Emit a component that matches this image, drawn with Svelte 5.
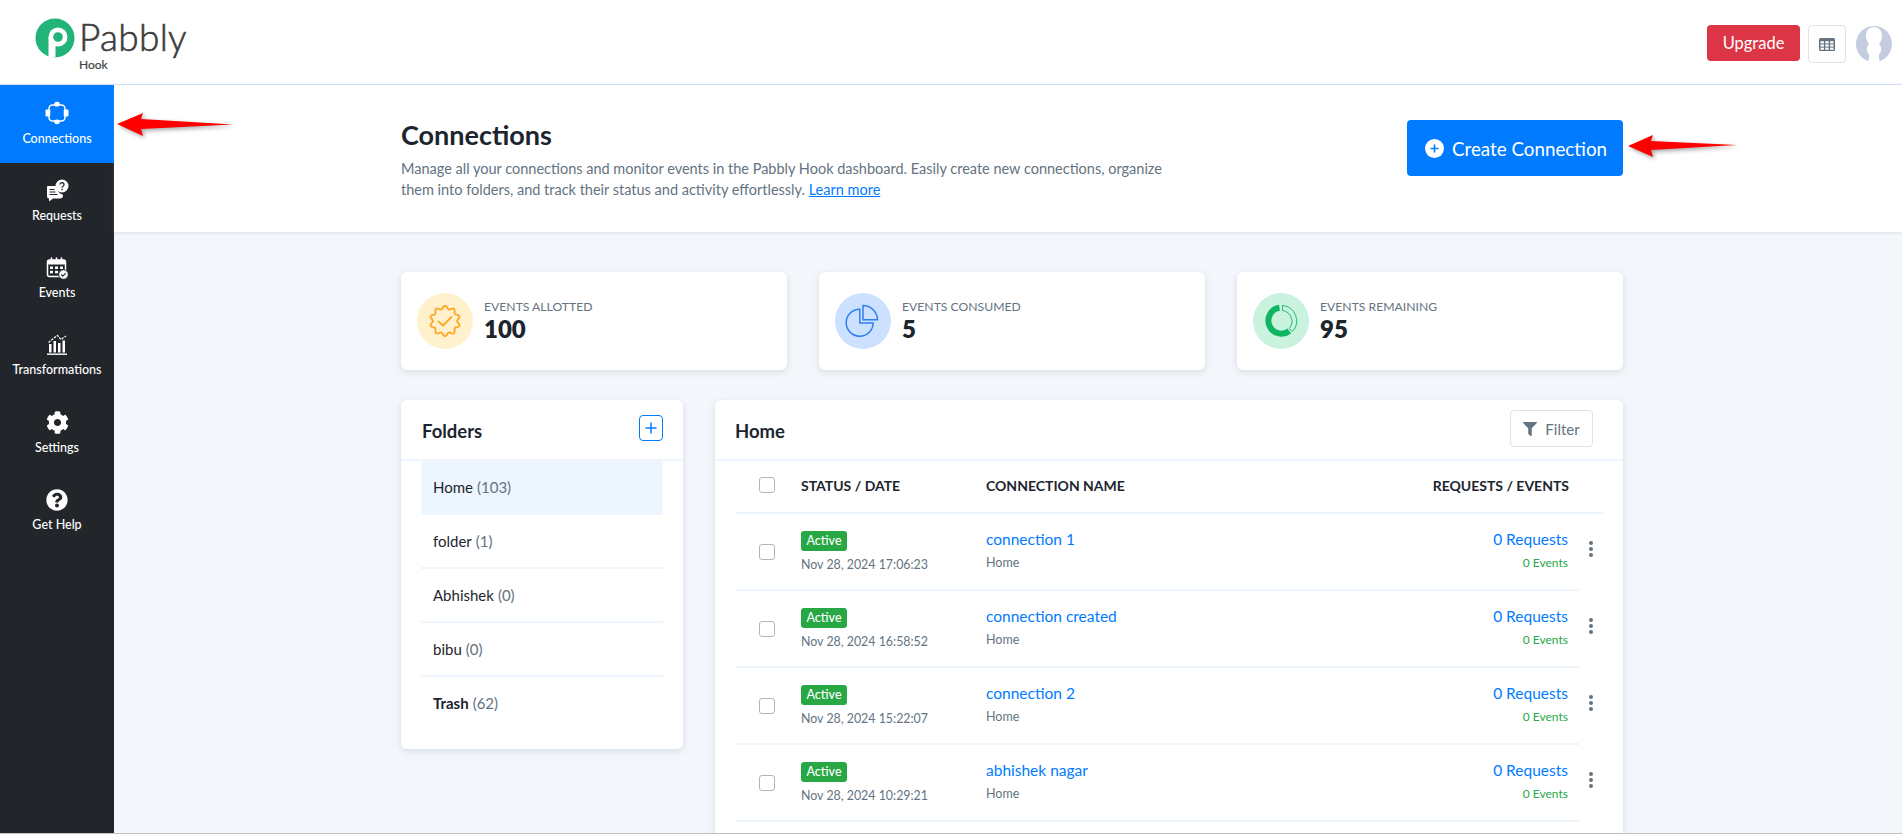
<script>
  const nav = ['Connections', 'Requests', 'Events', 'Transformations', 'Settings', 'Get Help'];
  const folders = [
    { name: 'Home', count: 103, active: true },
    { name: 'folder', count: 1 },
    { name: 'Abhishek', count: 0 },
    { name: 'bibu', count: 0 },
    { name: 'Trash', count: 62, bold: true }
  ];
  const rows = [
    { date: 'Nov 28, 2024 17:06:23', name: 'connection 1' },
    { date: 'Nov 28, 2024 16:58:52', name: 'connection created' },
    { date: 'Nov 28, 2024 15:22:07', name: 'connection 2' },
    { date: 'Nov 28, 2024 10:29:21', name: 'abhishek nagar' }
  ];
  let badge = '';
  for (let i = 0; i <= 120; i++) {
    const t = (i / 120) * Math.PI * 2;
    const r = 13.6 + 1.5 * Math.cos(10 * t);
    badge += (i ? 'L' : 'M') + (18 + r * Math.sin(t)).toFixed(2) + ' ' + (18 - r * Math.cos(t)).toFixed(2);
  }
  badge += 'Z';
</script>

<div class="page">
  <header class="top">
    <div class="logo">
      <svg class="logo-mark" viewBox="0 0 40 40" width="40" height="40">
        <circle cx="20" cy="20" r="19.5" fill="#22b378" />
        <circle cx="23" cy="19" r="9.500" fill="#fff" />
        <rect x="13.500" y="19" width="7" height="20.400" fill="#fff" />
        <circle cx="23" cy="19" r="4.800" fill="#22b378" />
      </svg>
      <div class="logo-text">
        <span class="logo-name">Pabbly</span>
        <span class="logo-sub">Hook</span>
      </div>
    </div>
    <div class="top-actions">
      <button class="upgrade">Upgrade</button>
      <button class="grid-btn" aria-label="Apps">
        <svg viewBox="0 0 16 13" width="16" height="13">
          <rect width="16" height="13" rx="1.5" fill="#637381" />
          <g fill="#fff">
            <rect x="1.5" y="3.2" width="3.4" height="2.2" /><rect x="6.3" y="3.2" width="3.4" height="2.2" /><rect x="11.1" y="3.2" width="3.4" height="2.2" />
            <rect x="1.5" y="6.4" width="3.4" height="2.2" /><rect x="6.3" y="6.4" width="3.4" height="2.2" /><rect x="11.1" y="6.4" width="3.4" height="2.2" />
            <rect x="1.5" y="9.6" width="3.4" height="2.2" /><rect x="6.3" y="9.6" width="3.4" height="2.2" /><rect x="11.1" y="9.6" width="3.4" height="2.2" />
          </g>
        </svg>
      </button>
      <svg class="avatar" viewBox="0 0 36 36" width="36" height="36">
        <circle cx="18" cy="18" r="18" fill="#c4cde0" />
        <path d="M18 1c-5 0-8 3.600-8 8.500 0 3.500 1.200 6 2.500 8 .6 1-.2 2-1 3-1.400 1.800-.8 5 1 7 1 1.200.8 5-.5 9h12c-1.300-4-1.500-7.800-.5-9 1.800-2 2.400-5.200 1-7-.8-1-1.600-2-1-3 1.300-2 2.500-4.500 2.500-8C26 4.600 23 1 18 1z" fill="#fff" />
      </svg>
    </div>
  </header>

  <div class="body">
    <nav class="side">
      {#each nav as label, i}
        <div class="nav-item" class:active={i === 0}>
          <div class="nav-icon">
            {#if i === 0}
              <svg viewBox="0 0 24 24" width="24" height="24" fill="#fff">
                <rect x="4" y="4" width="16" height="16" rx="3.500" fill="none" stroke="#fff" stroke-width="1.500" />
                <ellipse cx="12" cy="3.200" rx="2.800" ry="2.400" /><ellipse cx="12" cy="20.800" rx="2.800" ry="2.400" />
                <rect x="0.500" y="8.500" width="4.800" height="7" rx="1" /><rect x="18.700" y="8.500" width="4.800" height="7" rx="1" />
              </svg>
            {:else if i === 1}
              <svg viewBox="0 0 24 24" width="24" height="24" fill="#fff">
                <path d="M3 7h9v1.500a8 8 0 0 0 6 7.200v.8a3 3 0 0 1-3 3H8l-4 3v-3a2 2 0 0 1-2-2V8a1 1 0 0 1 1-1z" />
                <circle cx="17" cy="7" r="6.500" />
                <path d="M15 5.500a2 2 0 1 1 3 1.800c-.7.400-1 .8-1 1.500" fill="none" stroke="#22262b" stroke-width="1.300" />
                <circle cx="17" cy="10.600" r=".8" fill="#22262b" />
                <path d="M4.500 10.500h5M4.500 13h6M4.500 15.500h8" stroke="#22262b" stroke-width="1.100" />
              </svg>
            {:else if i === 2}
              <svg viewBox="0 0 24 24" width="24" height="24" fill="#fff">
                <rect x="2.500" y="4" width="18" height="16.500" rx="2" fill="none" stroke="#fff" stroke-width="1.500" />
                <rect x="2.500" y="4" width="18" height="4.500" rx="1.500" />
                <path d="M6.500 2v3M11.500 2v3M16.500 2v3" stroke="#fff" stroke-width="1.600" stroke-linecap="round" />
                <g>
                  <rect x="5" y="10.500" width="3" height="2.500" /><rect x="10" y="10.500" width="3" height="2.500" /><rect x="15" y="10.500" width="3" height="2.500" />
                  <rect x="5" y="14.800" width="3" height="2.500" /><rect x="10" y="14.800" width="3" height="2.500" />
                </g>
                <circle cx="18.500" cy="18.500" r="4.800" stroke="#22262b" stroke-width="1" />
                <path d="M16.300 18.500l1.600 1.600 2.800-2.900" fill="none" stroke="#22262b" stroke-width="1.100" />
              </svg>
            {:else if i === 3}
              <svg viewBox="0 0 24 24" width="24" height="24" fill="#fff">
                <path d="M3.500 9.500L9 5l3.500-2.500 3.500 4 5-3.500" fill="none" stroke="#fff" stroke-width="1.200" stroke-dasharray="2.500 1" />
                <rect x="4" y="11" width="2.500" height="8.500" /><rect x="8.500" y="8" width="2.500" height="11.500" /><rect x="13" y="10" width="2.500" height="9.500" /><rect x="17.500" y="7.500" width="2.500" height="12" />
                <rect x="2" y="20.500" width="20" height="1.400" />
              </svg>
            {:else if i === 4}
              <svg viewBox="0 0 512 512" width="23" height="23" fill="#fff">
                <path d="M487.4 315.7l-42.6-24.6c4.3-23.2 4.3-47 0-70.2l42.6-24.6c4.9-2.8 7.1-8.6 5.500-14-11.100-35.600-30-67.800-54.700-94.600-3.800-4.100-10-5.100-14.800-2.300L380.800 110c-17.900-15.400-38.500-27.300-60.800-35.100V25.800c0-5.600-3.900-10.500-9.400-11.700-36.700-8.200-74.300-7.800-109.200 0-5.500 1.200-9.400 6.100-9.400 11.700V75c-22.200 7.900-42.800 19.800-60.800 35.100L88.700 85.500c-4.900-2.800-11-1.900-14.800 2.300-24.700 26.700-43.600 58.900-54.700 94.600-1.700 5.400.6 11.200 5.500 14L67.300 221c-4.300 23.200-4.300 47 0 70.200l-42.600 24.600c-4.900 2.800-7.100 8.600-5.500 14 11.100 35.600 30 67.800 54.700 94.600 3.800 4.100 10 5.100 14.800 2.300l42.600-24.600c17.900 15.400 38.500 27.300 60.800 35.100v49.200c0 5.600 3.900 10.500 9.400 11.700 36.700 8.200 74.300 7.800 109.200 0 5.500-1.200 9.400-6.100 9.400-11.700v-49.200c22.200-7.900 42.800-19.800 60.800-35.100l42.600 24.600c4.900 2.800 11 1.900 14.800-2.300 24.700-26.700 43.600-58.900 54.700-94.600 1.500-5.500-.7-11.300-5.600-14.100zM256 336c-44.100 0-80-35.900-80-80s35.900-80 80-80 80 35.900 80 80-35.900 80-80 80z" />
              </svg>
            {:else}
              <svg viewBox="0 0 512 512" width="22" height="22" fill="#fff">
                <path d="M504 256c0 136.997-111.043 248-248 248S8 392.997 8 256C8 119.083 119.043 8 256 8s248 111.083 248 248zM262.655 90c-54.497 0-89.255 22.957-116.549 63.758-3.536 5.286-2.353 12.415 2.715 16.258l34.699 26.31c5.205 3.947 12.621 3.008 16.665-2.122 17.864-22.658 30.113-35.797 57.303-35.797 20.429 0 45.698 13.148 45.698 32.958 0 14.976-12.363 22.667-32.534 33.976C247.128 238.528 216 254.941 216 296v4c0 6.627 5.373 12 12 12h56c6.627 0 12-5.373 12-12v-1.333c0-28.462 83.186-29.647 83.186-106.667 0-58.002-60.165-102-116.531-102zM256 338c-25.365 0-46 20.635-46 46 0 25.364 20.635 46 46 46s46-20.636 46-46c0-25.365-20.635-46-46-46z" />
              </svg>
            {/if}
          </div>
          <span class="nav-label">{label}</span>
        </div>
      {/each}
    </nav>

    <main class="main">
      <section class="hero">
        <div class="hero-text">
          <h1>Connections</h1>
          <p>Manage all your connections and monitor events in the Pabbly Hook dashboard. Easily create new connections, organize them into folders, and track their status and activity effortlessly. <a href="#top">Learn more</a></p>
        </div>
        <button class="create">
          <svg viewBox="0 0 18 18" width="19" height="19">
            <circle cx="9" cy="9" r="9" fill="#fff" />
            <path d="M9 5.200v7.600M5.200 9h7.600" stroke="#007bff" stroke-width="1.500" />
          </svg>
          Create Connection
        </button>
      </section>

      <section class="content">
        <div class="stats">
          <div class="stat">
            <div class="stat-icon amber">
              <svg viewBox="0 0 36 36" width="36" height="36" fill="none" stroke="#fda92d" stroke-width="1.900">
                <path d={badge} />
                <path d="M11.500 18.500l4.500 4 8.500-8.500" stroke-linecap="round" stroke-linejoin="round" />
              </svg>
            </div>
            <div><div class="stat-label">EVENTS ALLOTTED</div><div class="stat-value">100</div></div>
          </div>
          <div class="stat">
            <div class="stat-icon blue">
              <svg viewBox="0 0 36 36" width="36" height="36" fill="none" stroke="#2f7ff0" stroke-width="1.500">
                <path d="M14.800 6.200A13.500 13.500 0 1 0 28.200 20H14.800z" />
                <path d="M18 2.600V16.800h14.500A14.500 14.500 0 0 0 18 2.600z" />
              </svg>
            </div>
            <div><div class="stat-label">EVENTS CONSUMED</div><div class="stat-value">5</div></div>
          </div>
          <div class="stat">
            <div class="stat-icon green">
              <svg viewBox="0 0 36 36" width="36" height="36" fill="none">
                <path d="M16.500 4.800A13 13 0 1 0 26.300 28" stroke="#10b561" stroke-width="6" />
                <path d="M19.500 2.500A15.500 15.500 0 0 1 29.500 28.500L26.300 25.500A11 11 0 0 0 19.500 7.500z" stroke="#10b561" stroke-width=".9" />
              </svg>
            </div>
            <div><div class="stat-label">EVENTS REMAINING</div><div class="stat-value">95</div></div>
          </div>
        </div>

        <div class="panels">
          <aside class="panel folders">
            <div class="panel-head">
              <h2>Folders</h2>
              <button class="add" aria-label="Add folder">
                <svg viewBox="0 0 14 14" width="14" height="14"><path d="M7 1.500v11M1.500 7h11" stroke="#007bff" stroke-width="1.500" /></svg>
              </button>
            </div>
            <ul>
              {#each folders as f}
                <li class:on={f.active}>
                  <span class:strong={f.bold}>{f.name}</span> <span class="count">({f.count})</span>
                </li>
              {/each}
            </ul>
          </aside>

          <div class="panel table">
            <div class="panel-head">
              <h2>Home</h2>
              <button class="filter">
                <svg viewBox="0 0 512 512" width="14" height="14" fill="#637381">
                  <path d="M487.976 0H24.028C2.71 0-8.047 25.866 7.058 40.971L192 225.941V432c0 7.831 3.821 15.328 10.237 19.82l80 55.98C298.02 518.69 320 507.493 320 487.98V225.941l184.947-184.97C520.021 25.896 509.338 0 487.976 0z" />
                </svg>
                Filter
              </button>
            </div>
            <div class="tbody">
              <div class="thead">
                <span class="cb head-cb"></span>
                <span>STATUS / DATE</span>
                <span>CONNECTION NAME</span>
                <span class="right">REQUESTS / EVENTS</span>
              </div>
              {#each rows as r}
                <div class="row-wrap">
                  <div class="row">
                    <span class="cb"></span>
                    <div class="stack">
                      <span class="badge">Active</span>
                      <span class="date">{r.date}</span>
                    </div>
                    <div class="stack names">
                      <span class="link">{r.name}</span>
                      <span class="sub">Home</span>
                    </div>
                    <div class="stack names right">
                      <span class="link">0 Requests</span>
                      <span class="events">0 Events</span>
                    </div>
                  </div>
                  <div class="dots"><i></i><i></i><i></i></div>
                </div>
              {/each}
            </div>
          </div>
        </div>
      </section>
    </main>
  </div>

  <svg class="arrow arrow-a" viewBox="0 0 130 40" width="130" height="40">
    <path d="M2 15L28 4 26 10 118 15.500 26 20 28 27z" fill="#f00" />
  </svg>
  <svg class="arrow arrow-b" viewBox="0 0 125 40" width="125" height="40">
    <path d="M2 16L27 5 25 11 111 15 25 20 27 27z" fill="#f00" />
  </svg>
  <div class="edge"></div>
</div>

<style>
  :global(body) {
    margin: 0;
    background: #f3f6fa;
    font-family: Lato, "Liberation Sans", sans-serif;
    color: #1c252e;
  }
  .page { position: relative; height: 834px; overflow: hidden; background: #f3f6fa; }
  button { font-family: inherit; cursor: pointer; }

  .top {
    height: 84px;
    box-sizing: content-box;
    background: #fff;
    border-bottom: 1px solid #d6e2fb;
    display: flex;
    align-items: flex-start;
    justify-content: space-between;
  }
  .logo { display: flex; margin: 18px 0 0 35px; gap: 4px; }
  .logo-mark { flex: none; }
  .logo-text { display: flex; flex-direction: column; color: #3d3d3d; }
  .logo-name { font-size: 37px; font-weight: 300; line-height: 38px; height: 40px; letter-spacing: .3px; -webkit-text-stroke: .6px #3d3d3d; }
  .logo-sub { font-size: 12px; line-height: 14px; font-weight: 400; color: #444; -webkit-text-stroke: .2px #444; }
  .top-actions { display: flex; align-items: flex-start; margin: 25px 10px 0 0; }
  .upgrade {
    width: 93px; height: 36px; border: 0; border-radius: 4px;
    background: #dc3545; color: #fff; font-size: 16.500px;
  }
  .grid-btn {
    width: 38px; height: 38px; margin-left: 8px; padding: 0;
    background: #fff; border: 1px solid #dee2e6; border-radius: 4px;
    display: flex; align-items: center; justify-content: center;
  }
  .avatar { margin: 1px 0 0 10px; }

  .body { display: flex; height: 749px; }
  .side { width: 114px; flex: none; background: #22262b; }
  .nav-item {
    height: 77.2px; box-sizing: border-box; padding-top: 16px;
    display: flex; flex-direction: column; align-items: center;
    color: #fff;
  }
  .nav-item.active { background: #007bff; height: 78px; }
  .nav-item.active .nav-label { margin-top: 5px; }
  .nav-icon { height: 24px; display: flex; align-items: center; justify-content: center; }
  .nav-label { margin-top: 4px; font-size: 12.500px; line-height: 18px; font-weight: 500; white-space: nowrap; }

  .main { flex: 1; min-width: 0; }
  .hero {
    height: 147px; box-sizing: border-box; background: #fff;
    padding: 35px 279px 0 287px;
    display: flex; justify-content: space-between; align-items: flex-start;
    box-shadow: 0 1px 3px rgba(145, 158, 171, .25);
  }
  .hero-text { width: 790px; }
  h1 { margin: 0; font-size: 27px; line-height: 29px; font-weight: 700; color: #1c252e; }
  .hero p { margin: 9px 0 0; font-size: 14.500px; line-height: 21px; color: #637381; }
  .hero a { color: #007bff; text-decoration: underline; }
  .create {
    width: 216px; height: 56px; flex: none; border: 0; border-radius: 4px;
    background: #007bff; color: #fff; font-size: 18.800px; padding-left: 8px;
    display: flex; align-items: center; justify-content: center; gap: 8px;
  }

  .content { padding: 40px 279px 0 287px; }
  .stats { display: flex; gap: 32px; }
  .stat {
    width: 386px; height: 98px; box-sizing: border-box; padding-left: 16px;
    background: #fff; border-radius: 6px;
    box-shadow: 0 2px 6px rgba(145, 158, 171, .28);
    display: flex; align-items: center; gap: 11px;
  }
  .stat-icon { width: 56px; height: 56px; border-radius: 50%; display: flex; align-items: center; justify-content: center; }
  .amber { background: #fff1cc; }
  .blue { background: #cce0ff; }
  .green { background: #c9f2df; }
  .stat-label { font-size: 12.200px; line-height: 16px; color: #637381; }
  .stat-value { font-size: 24px; line-height: 28px; font-weight: 800; color: #1c252e; }

  .panels { display: flex; gap: 32px; margin-top: 30px; align-items: flex-start; }
  .panel { background: #fff; border-radius: 6px; box-shadow: 0 2px 6px rgba(145, 158, 171, .28); }
  .panel-head {
    height: 61px; box-sizing: border-box; border-bottom: 2px solid #eef5fd;
    display: flex; align-items: center; justify-content: space-between;
  }
  h2 { margin: 3px 0 0; font-size: 18.500px; line-height: 22px; font-weight: 700; color: #1c252e; }
  .folders { width: 282px; height: 349px; flex: none; }
  .folders .panel-head { padding: 0 20px 0 21px; }
  .add {
    width: 24px; height: 26px; padding: 0; margin-top: -3px; background: #fff;
    border: 1px solid #007bff; border-radius: 4px;
    display: flex; align-items: center; justify-content: center;
  }
  ul { list-style: none; margin: 0 20px 0 20px; padding: 0; }
  li {
    height: 54px; box-sizing: border-box; padding-left: 12px;
    display: flex; align-items: center; gap: 4px;
    font-size: 15px; color: #1c252e;
    border-bottom: 2px solid #eef5fd;
  }
  li.on { background: #edf5fe; border-bottom: 0; border-radius: 2px 0 0 2px; padding-bottom: 2px; }
  li:last-child { border-bottom: 0; padding-bottom: 2px; }
  .count { color: #637381; }
  .strong { font-weight: 700; }

  .table { flex: 1; height: 520px; }
  .table .panel-head { padding: 0 30px 0 20px; }
  .filter {
    width: 83px; height: 37px; margin-top: -2px; background: #fff; color: #637381;
    border: 1px solid #dee2e6; border-radius: 4px; font-size: 15px;
    display: flex; align-items: center; justify-content: center; gap: 8px;
  }
  .tbody { padding: 0 20px; }
  .thead {
    height: 53px; box-sizing: border-box; border-bottom: 2px solid #eef5fd;
    display: grid; grid-template-columns: 42px 185px 1fr auto; align-items: center;
    padding: 0 34px 2px 24px;
    font-size: 14px; font-weight: 700; color: #1c252e;
  }
  .head-cb { margin-top: -1px; }
  .row-wrap { display: flex; align-items: center; }
  .row {
    width: 844px; height: 77px; box-sizing: border-box; flex: none;
    border-bottom: 2px solid #eef5fd;
    display: grid; grid-template-columns: 42px 185px 1fr auto; align-items: center;
    padding: 0 11px 0 24px;
  }
  .cb {
    display: block; width: 16px; height: 16px; box-sizing: border-box;
    border: 1px solid #adb5bd; border-radius: 3px; background: #fff;
  }
  .stack { display: flex; flex-direction: column; align-items: flex-start; }
  .stack.right { align-items: flex-end; }
  .right { text-align: right; }
  .badge {
    width: 46px; height: 20px; background: #28a745; color: #fff; border-radius: 3px;
    font-size: 12.500px; line-height: 20px; text-align: center; font-weight: 500;
  }
  .date { font-size: 12.400px; line-height: 16px; color: #637381; margin-top: 6px; }
  .names { margin-top: -3px; }
  .link { font-size: 15.500px; line-height: 18px; color: #007bff; }
  .sub { font-size: 12.500px; line-height: 16px; color: #637381; margin-top: 7px; }
  .events { font-size: 12px; line-height: 16px; color: #28a745; margin-top: 7px; }
  .dots { width: 24px; display: flex; flex-direction: column; align-items: center; gap: 1.700px; margin-top: -7px; }
  .dots i { width: 4px; height: 4px; border-radius: 50%; background: #637381; }

  .arrow { position: absolute; filter: drop-shadow(2px 2px 2px rgba(0, 0, 0, .35)); }
  .arrow-a { left: 115px; top: 109px; }
  .arrow-b { left: 1626px; top: 130px; }
  .edge { position: absolute; left: 0; right: 0; bottom: 0; height: 1.500px; background: #c9bfba; }
</style>
